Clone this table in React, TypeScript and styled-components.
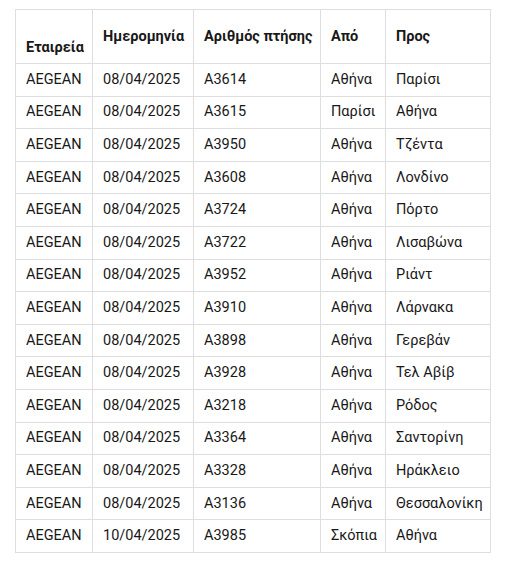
import React from "react";
import styled, { createGlobalStyle } from "styled-components";

const Global = createGlobalStyle`
  html, body { margin: 0; padding: 0; background: #ffffff; }
  body { font-family: "Roboto", "Noto Sans", sans-serif; color: #181818; }
`;

const Page = styled.div`
  padding: 9px 0 0 15px;
`;

const Table = styled.table`
  border-collapse: collapse;
  table-layout: fixed;
  width: 475px;
  font-size: 14.5px;
`;

const Col = styled.col<{ $w: number }>`
  width: ${(p) => p.$w}px;
`;

const HeadRow = styled.tr`
  height: 54px;
`;

const Row = styled.tr`
  height: 32.6px;
`;

const Th = styled.th<{ $low?: boolean }>`
  border: 1px solid #dedede;
  text-align: left;
  font-weight: 700;
  padding: ${(p) => (p.$low ? "23px 10px 0" : "0 10px")};
  vertical-align: middle;
  line-height: 18px;
  white-space: nowrap;
  overflow: hidden;
`;

const Td = styled.td`
  border: 1px solid #dedede;
  padding: 0 10px;
  line-height: 18px;
  white-space: nowrap;
  vertical-align: middle;
  overflow: hidden;
`;

const rows: [string, string, string, string, string][] = [
  ["AEGEAN", "08/04/2025", "A3614", "Αθήνα", "Παρίσι"],
  ["AEGEAN", "08/04/2025", "A3615", "Παρίσι", "Αθήνα"],
  ["AEGEAN", "08/04/2025", "A3950", "Αθήνα", "Τζέντα"],
  ["AEGEAN", "08/04/2025", "A3608", "Αθήνα", "Λονδίνο"],
  ["AEGEAN", "08/04/2025", "A3724", "Αθήνα", "Πόρτο"],
  ["AEGEAN", "08/04/2025", "A3722", "Αθήνα", "Λισαβώνα"],
  ["AEGEAN", "08/04/2025", "A3952", "Αθήνα", "Ριάντ"],
  ["AEGEAN", "08/04/2025", "A3910", "Αθήνα", "Λάρνακα"],
  ["AEGEAN", "08/04/2025", "A3898", "Αθήνα", "Γερεβάν"],
  ["AEGEAN", "08/04/2025", "A3928", "Αθήνα", "Τελ Αβίβ"],
  ["AEGEAN", "08/04/2025", "A3218", "Αθήνα", "Ρόδος"],
  ["AEGEAN", "08/04/2025", "A3364", "Αθήνα", "Σαντορίνη"],
  ["AEGEAN", "08/04/2025", "A3328", "Αθήνα", "Ηράκλειο"],
  ["AEGEAN", "08/04/2025", "A3136", "Αθήνα", "Θεσσαλονίκη"],
  ["AEGEAN", "10/04/2025", "A3985", "Σκόπια", "Αθήνα"],
];

export default function App() {
  return (
    <Page>
      <Global />
      <Table>
        <colgroup>
          <Col $w={77} />
          <Col $w={101} />
          <Col $w={127} />
          <Col $w={65} />
          <Col $w={105} />
        </colgroup>
        <thead>
          <HeadRow>
            <Th $low>Εταιρεία</Th>
            <Th>Ημερομηνία</Th>
            <Th>Αριθμός πτήσης</Th>
            <Th>Από</Th>
            <Th>Προς</Th>
          </HeadRow>
        </thead>
        <tbody>
          {rows.map((r, i) => (
            <Row key={i}>
              {r.map((c, j) => (
                <Td key={j}>{c}</Td>
              ))}
            </Row>
          ))}
        </tbody>
      </Table>
    </Page>
  );
}
